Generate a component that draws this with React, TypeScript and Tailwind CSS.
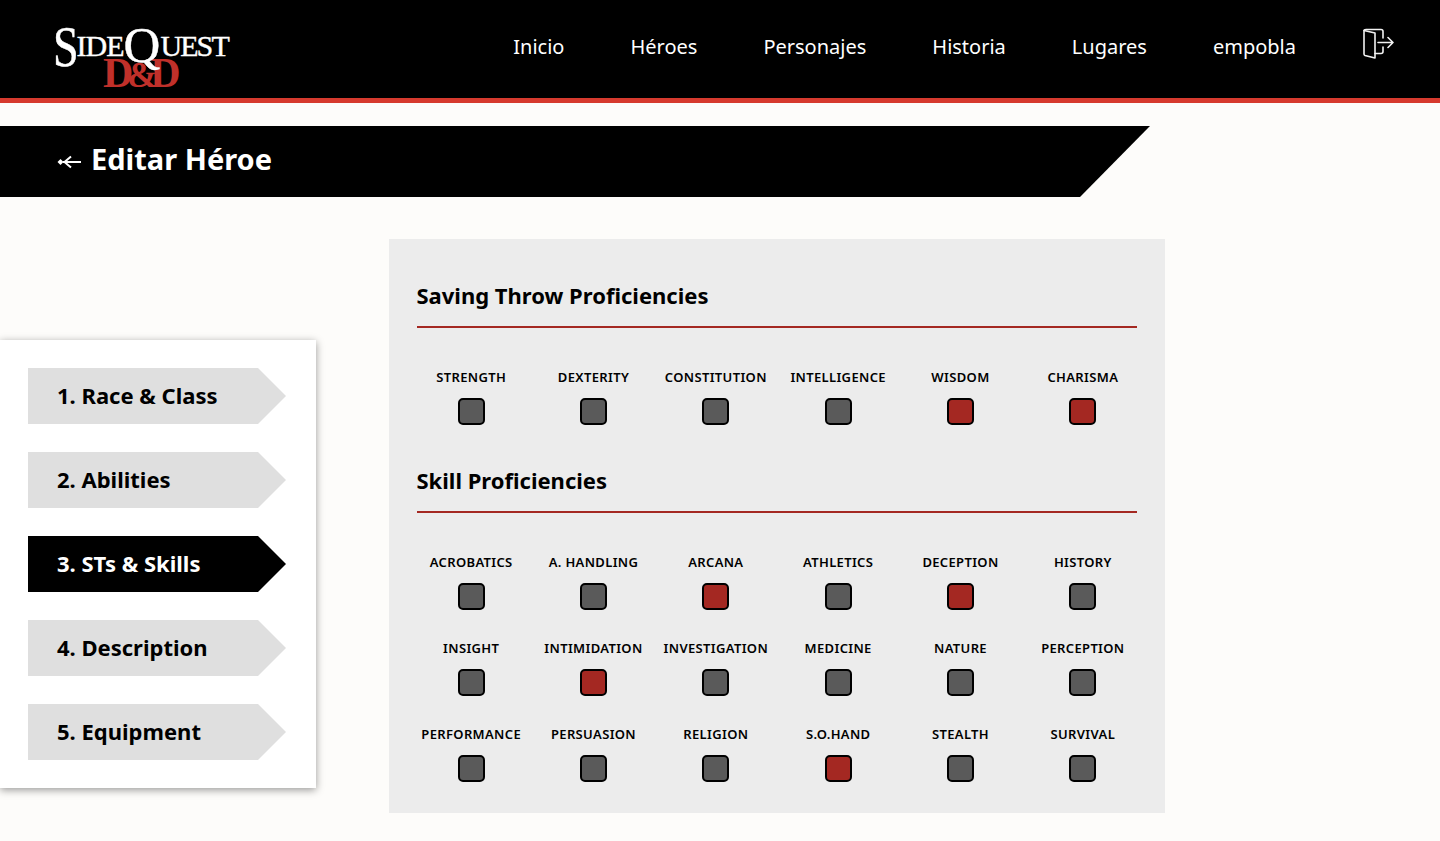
import React from 'react';

const navLinks = ['Inicio', 'Héroes', 'Personajes', 'Historia', 'Lugares', 'empobla'];

const steps = ['1. Race & Class', '2. Abilities', '3. STs & Skills', '4. Description', '5. Equipment'];

type Prof = { name: string, on: boolean };

const savingThrows: Prof[] = [
    {name: 'STRENGTH', on: false},
    {name: 'DEXTERITY', on: false},
    {name: 'CONSTITUTION', on: false},
    {name: 'INTELLIGENCE', on: false},
    {name: 'WISDOM', on: true},
    {name: 'CHARISMA', on: true},
];

const skills: Prof[] = [
    {name: 'ACROBATICS', on: false},
    {name: 'A. HANDLING', on: false},
    {name: 'ARCANA', on: true},
    {name: 'ATHLETICS', on: false},
    {name: 'DECEPTION', on: true},
    {name: 'HISTORY', on: false},
    {name: 'INSIGHT', on: false},
    {name: 'INTIMIDATION', on: true},
    {name: 'INVESTIGATION', on: false},
    {name: 'MEDICINE', on: false},
    {name: 'NATURE', on: false},
    {name: 'PERCEPTION', on: false},
    {name: 'PERFORMANCE', on: false},
    {name: 'PERSUASION', on: false},
    {name: 'RELIGION', on: false},
    {name: 'S.O.HAND', on: true},
    {name: 'STEALTH', on: false},
    {name: 'SURVIVAL', on: false},
];

const Logo = () => (
    <div className="relative w-[178px] h-[72px] font-['Liberation_Serif',serif]">
        <div className="absolute left-[50px] top-[34px] flex items-baseline text-[#c0302a] font-bold leading-none">
            <span className="text-[42px] tracking-[-1px]">D</span>
            <span className="text-[36px] -ml-[5px] -mr-[7px]">&amp;</span>
            <span className="text-[42px]">D</span>
        </div>
        <div className="absolute left-0 -top-[4px] flex items-baseline text-white leading-none [-webkit-text-stroke:0.4px_white]">
            <span className="inline-block origin-bottom scale-y-[1.25] translate-y-[12px] text-[46px]">S</span>
            <span className="text-[30px] tracking-[-1px] -ml-[2px]">IDE</span>
            <span className="inline-block translate-y-[6px] text-[51px]">Q</span>
            <span className="text-[30px] tracking-[-1.9px]">UEST</span>
        </div>
    </div>
);

const ExitIcon = () => (
    <svg width="32" height="32" viewBox="0 0 32 32" fill="none" stroke="#f2f2f2" strokeWidth="1.6" strokeLinejoin="round" strokeLinecap="round">
        <path d="M2 2.5 L13 5 V30 L3 27.5 Q2 27 2 26 Z" />
        <path d="M2 2.5 Q2 1.5 4 1.5 H19 Q21 1.5 21 3.5 V10" />
        <path d="M13 25.5 H19 Q21 25.5 21 23.5 V19" />
        <path d="M16 14.5 H31 M26 9.5 L31 14.5 L26 19.5" />
    </svg>
);

const BackArrow = () => (
    <svg width="25" height="14" viewBox="0 0 25 14" fill="none" stroke="white" strokeWidth="2" className="mt-[1px]">
        <path d="M6 7 H24 M14 1.5 L7.5 7 L14 12.5" />
        <path d="M0.5 7 L3.5 4 L6.5 7 L3.5 10 Z" fill="white" stroke="none" />
    </svg>
);

const ProfCell = ({name, on}: Prof) => (
    <div className="flex flex-col items-center h-[86px]">
        <span className="h-[18px] leading-[19px] text-[13px] font-semibold text-black whitespace-nowrap tracking-[0.35px]">{name}</span>
        <span className={`mt-[12px] w-[27px] h-[27px] rounded-[5px] border-2 border-black ${on ? 'bg-[#a42822]' : 'bg-[#5a5a5a]'}`} />
    </div>
);

const Section = ({title, items}: {title: string, items: Prof[]}) => (
    <div className="mb-[13px]">
        <h2 className="h-[30px] leading-[27px] text-[22px] font-bold text-black -ml-[0.5px]">{title}</h2>
        <div className="mt-[14px] mb-[40px] h-[2px] bg-[#a42822]" />
        <div className="grid grid-cols-6 -mx-[7px]">
            {items.map(item => <ProfCell key={item.name} {...item} />)}
        </div>
    </div>
);

const App = () => {
    return (
        <div className="min-h-[841px] bg-[#fdfcfa] font-['Noto_Sans',sans-serif] overflow-hidden">
            <header className="relative h-[103px] bg-black border-b-[5px] border-[#d63a2e] flex items-start">
                <div className="ml-[53px] mt-[18px]"><Logo /></div>
                <nav className="ml-auto mr-[144px] mt-[33px] flex gap-[66px] text-white text-[20px] leading-[28px]">
                    {navLinks.map(link => <a key={link}>{link}</a>)}
                </nav>
                <div className="absolute left-[1362px] top-[28px]"><ExitIcon /></div>
            </header>

            <div className="mt-[23px] w-[1150px] h-[71px] bg-black [clip-path:polygon(0_0,100%_0,1080px_100%,0_100%)] flex items-center gap-[10px] pl-[57px]">
                <BackArrow />
                <h1 className="text-white text-[29px] font-bold leading-none pb-[6px] -ml-[1px]">Editar Héroe</h1>
            </div>

            <div className="flex items-start mt-[42px]">
                <aside className="mt-[101px] w-[316px] bg-white shadow-[0_2px_8px_rgba(0,0,0,0.4)] pl-[28px] py-[28px] flex flex-col gap-[28px]">
                    {steps.map((step, i) => (
                        <div key={step}
                             className={`w-[258px] h-[56px] flex items-center pl-[29px] pb-[2px] text-[22px] font-bold [clip-path:polygon(0_0,230px_0,100%_50%,230px_100%,0_100%)] ${i === 2 ? 'bg-black text-white' : 'bg-[#dfdfdf] text-black'}`}>
                            {step}
                        </div>
                    ))}
                </aside>
                <section className="ml-[73px] w-[776px] h-[574px] bg-[#ececec] px-[28px] pt-[43px]">
                    <Section title="Saving Throw Proficiencies" items={savingThrows} />
                    <Section title="Skill Proficiencies" items={skills} />
                </section>
            </div>
        </div>
    );
};

export default App;
